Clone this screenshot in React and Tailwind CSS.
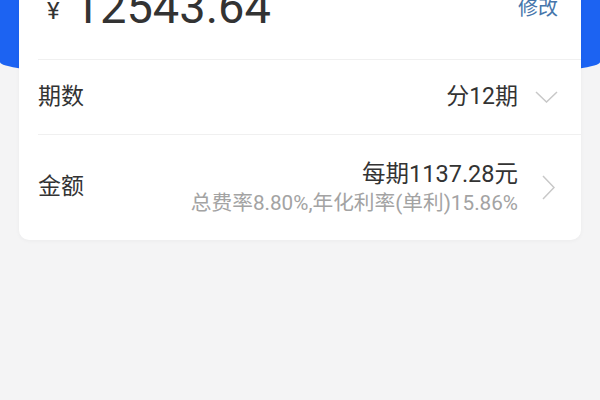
import React from "react";

export default function App() {
  const font = { fontFamily: 'Roboto, "Noto Sans CJK SC", sans-serif' };
  return (
    <div className="relative w-[600px] h-[400px] overflow-hidden bg-[#f4f4f5]" style={font}>
      <div className="h-[80px] bg-[#1c63f2] rounded-b-[50%_18px]" />
      <div className="relative -mt-[104px] mx-[19px] bg-white rounded-[10px] shadow-[0_1px_4px_rgba(0,0,0,0.04)]">
        <div className="ml-[19px] h-[84px] border-b border-[#f0f0f0] flex justify-between pl-[9px] pr-[23px]">
          <div className="flex items-baseline pt-[7px]">
            <span className="text-[24px] leading-none text-[#333] mr-[14px] -translate-y-[4px]">¥</span>
            <span className="text-[47px] leading-none text-[#333]">12543.64</span>
          </div>
          <div className="pt-[22px] text-[20px] leading-[20px] text-[#4676ab]">修改</div>
        </div>
        <div className="ml-[19px] h-[75px] border-b border-[#f0f0f0] flex items-center justify-between pr-[23px]">
          <span className="text-[23px] text-[#333]">期数</span>
          <div className="flex items-center">
            <span className="text-[23px] text-[#333]">分12期</span>
            <svg className="ml-[17px]" width="23" height="12" viewBox="0 0 23 12" fill="none">
              <path d="M1 1 L11.5 11 L22 1" stroke="#c8c8c8" strokeWidth="1.5" />
            </svg>
          </div>
        </div>
        <div className="ml-[19px] h-[105px] flex items-center justify-between pr-[26px]">
          <span className="text-[23px] text-[#333]">金额</span>
          <div className="flex items-center">
            <div className="flex flex-col items-end">
              <span className="text-[23.5px] leading-[30px] text-[#333]">每期1137.28元</span>
              <span className="text-[20.7px] leading-[28px] text-[#a3a3a3]">总费率8.80%,年化利率(单利)15.86%</span>
            </div>
            <svg className="ml-[24px]" width="13" height="25" viewBox="0 0 13 25" fill="none">
              <path d="M1 1 L12 12.5 L1 24" stroke="#c8c8c8" strokeWidth="1.5" />
            </svg>
          </div>
        </div>
      </div>
    </div>
  );
}
